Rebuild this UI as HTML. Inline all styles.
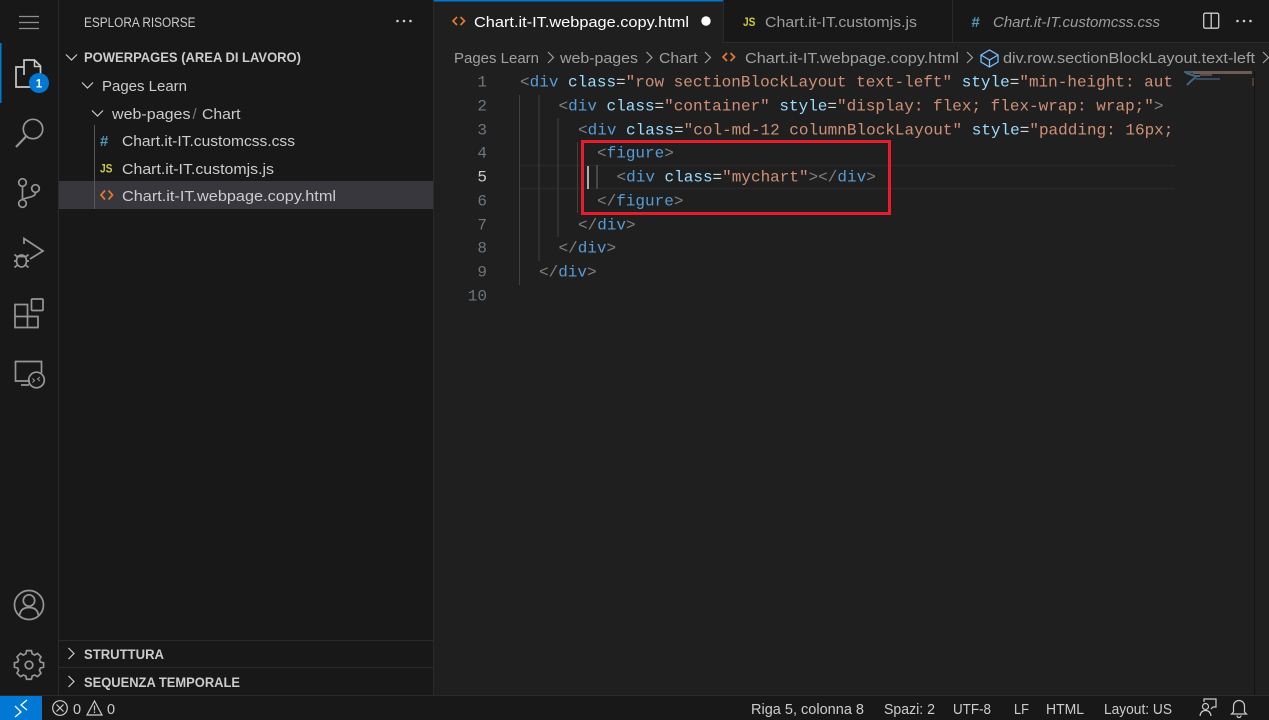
<!DOCTYPE html>
<html><head><meta charset="utf-8"><style>
html,body{margin:0;padding:0;background:#181818;overflow:hidden;width:1269px;height:720px}
svg{display:block}
text{font-family:"Liberation Sans",sans-serif;font-size:15px;white-space:pre}
.c{font-family:"Liberation Mono",monospace;font-size:16px;letter-spacing:0}
.ln{fill:#6e7681;text-anchor:end}
.b{fill:#808080}.t{fill:#569cd6}.a{fill:#9cdcfe}.e{fill:#d4d4d4}.s{fill:#ce9178}
.ic{fill:none;stroke:#969696;stroke-width:1.7}
.cv{fill:none;stroke:#cccccc;stroke-width:1.2}
.bc{fill:#a0a0a0}
.st{fill:#cccccc;font-size:14.5px}
</style></head><body>
<svg width="1269" height="720" viewBox="0 0 1269 720" xmlns="http://www.w3.org/2000/svg">
<defs><clipPath id="cl"><rect x="515" y="70" width="657" height="240"/></clipPath></defs>
<rect width="1269" height="720" fill="#181818"/>
<!-- editor -->
<rect x="434" y="43" width="835" height="652" fill="#1f1f1f"/>
<rect x="434" y="0" width="290" height="43" fill="#1f1f1f"/>
<rect x="434" y="0" width="290" height="1.5" fill="#0078d4"/>
<rect x="724" y="42" width="545" height="1" fill="#2b2b2b"/>
<rect x="723" y="0" width="1" height="43" fill="#2b2b2b"/>
<rect x="952" y="0" width="1" height="43" fill="#2b2b2b"/>
<rect x="58" y="0" width="1" height="695" fill="#2b2b2b"/>
<rect x="433" y="0" width="1" height="695" fill="#2b2b2b"/>
<rect x="59" y="640" width="374" height="1" fill="#2b2b2b"/>
<rect x="59" y="667" width="374" height="1" fill="#2b2b2b"/>
<rect x="0" y="695" width="1269" height="1" fill="#2b2b2b"/>
<!-- activity indicator -->
<rect x="0" y="43" width="1.5" height="60" fill="#0078d4"/>
<!-- hamburger -->
<path d="M19 16.5h20M19 22.5h20M19 28.5h20" stroke="#8f8f8f" stroke-width="1.2" fill="none"/>
<!-- explorer -->
<path d="M24 75V60h10.5l6 6v14H30" fill="none" stroke="#c8c8c8" stroke-width="1.7"/>
<path d="M34.5 60v6.5h6" fill="none" stroke="#c8c8c8" stroke-width="1.5"/>
<path d="M24 67h-8v20h17v-7" fill="none" stroke="#c8c8c8" stroke-width="1.7"/>
<circle cx="39" cy="83" r="10" fill="#0078d4"/>
<text x="39" y="87.5" text-anchor="middle" style="font-size:11.5px;font-weight:bold" fill="#fff">1</text>
<!-- search -->
<circle cx="33" cy="129" r="9.7" class="ic"/>
<path d="M26 136.5L16 147" class="ic" style="stroke-width:2.2"/>
<!-- source control -->
<g class="ic"><circle cx="22.5" cy="182.5" r="3.8"/><circle cx="35.5" cy="188.5" r="3.8"/><circle cx="22.5" cy="203.5" r="3.8"/><path d="M22.5 186.5v13M35.5 192.5c0 4-5 4.5-9 5.5l-3 1"/></g>
<!-- debug -->
<g class="ic"><path d="M24 244v-5.500L43 251l-13 8"/><ellipse cx="21.500" cy="261" rx="5" ry="6"/><path d="M14.500 254.500l3.500 3M28.500 254.500l-3.500 3M14 261h3M26 261h3M14.500 267.500l3.500-3M28.500 267.500l-3.500-3M17 256.500h9"/></g>
<!-- extensions -->
<g class="ic"><rect x="31.500" y="299" width="11.500" height="11.500" rx="1"/><path d="M15 316.500h12.500v11H15zM15 316.500V304.500h12.500v12M27.500 316.500h10.500v11H27.500"/></g>
<!-- remote -->
<g class="ic"><path d="M30 381H15.500v-19.500H41.500v11.500M21 385h8"/><circle cx="36.500" cy="380" r="7.800"/><path d="M32.500 382.500l2-2-2-2M40 377l-2.500 2 2.500 2" style="stroke-width:1.100"/></g>
<!-- account -->
<g class="ic"><circle cx="29" cy="605" r="14.500"/><circle cx="29" cy="600.500" r="5.700"/><path d="M19.500 616c.5-6 4-8.500 9.500-8.500s9 2.500 9.500 8.500"/></g>
<!-- gear -->
<g class="ic"><circle cx="29" cy="665" r="3.800"/><path style="stroke-width:2.100" d="M26 651h6l1 4 3 1.500 3.700-2 4.300 4.300-2 3.700 1.200 2.800 4 1v5.400l-4 1-1.200 2.900 2 3.700-4.300 4.200-3.700-2-3 1.300-1 4h-6l-1-4-3-1.300-3.700 2-4.300-4.200 2-3.700-1.200-2.900-4-1v-5.400l4-1 1.200-2.800-2-3.700 4.300-4.300 3.700 2 3-1.500z" transform="translate(5.800 129.800) scale(.8)"/></g>

<!-- sidebar -->
<text x="84" y="27" fill="#cccccc" textLength="111.500" lengthAdjust="spacingAndGlyphs" style="font-size:13.5px">ESPLORA RISORSE</text>
<g fill="#cccccc"><circle cx="397.500" cy="21" r="1.300"/><circle cx="404" cy="21" r="1.300"/><circle cx="410.500" cy="21" r="1.300"/></g>
<rect x="59" y="181" width="374" height="28" fill="#37373d"/>
<rect x="94" y="125" width="1" height="84" fill="#585858"/>
<path d="M66 54.500l5.500 5.500 5.500-5.500M82 82.500l5.500 5.500 5.500-5.500M92 110.500l5.500 5.500 5.500-5.500" class="cv"/>
<text x="84" y="62" fill="#cccccc" textLength="217" lengthAdjust="spacingAndGlyphs" style="font-size:13.5px;font-weight:bold">POWERPAGES (AREA DI LAVORO)</text>
<text x="102" y="91" fill="#cccccc" textLength="85" lengthAdjust="spacingAndGlyphs">Pages Learn</text>
<text x="112" y="119" fill="#cccccc" textLength="78.500" lengthAdjust="spacingAndGlyphs">web-pages</text>
<text x="192.500" y="119" fill="#7a7a7a">/</text>
<text x="202" y="119" fill="#cccccc" textLength="38.500" lengthAdjust="spacingAndGlyphs">Chart</text>
<text x="100" y="146" fill="#519aba" style="font-size:15px;font-weight:bold">#</text>
<text x="122" y="146" fill="#cccccc" textLength="173" lengthAdjust="spacingAndGlyphs">Chart.it-IT.customcss.css</text>
<text x="100" y="172.500" fill="#cbcb41" textLength="12.500" lengthAdjust="spacingAndGlyphs" style="font-size:12px;font-weight:bold">JS</text>
<text x="122" y="174" fill="#cccccc" textLength="152" lengthAdjust="spacingAndGlyphs">Chart.it-IT.customjs.js</text>
<path d="M105 190.500l-4 4.500 4 4.500M108.500 190.500l4 4.500-4 4.500" fill="none" stroke="#e37933" stroke-width="1.700"/>
<text x="122" y="201" fill="#cccccc" textLength="214" lengthAdjust="spacingAndGlyphs">Chart.it-IT.webpage.copy.html</text>
<path d="M68.500 648l5.500 5.500-5.500 5.500M68.500 676l5.500 5.500-5.500 5.500" class="cv"/>
<text x="84" y="659" fill="#cccccc" textLength="80" lengthAdjust="spacingAndGlyphs" style="font-size:13.5px;font-weight:bold">STRUTTURA</text>
<text x="84" y="687" fill="#cccccc" textLength="156" lengthAdjust="spacingAndGlyphs" style="font-size:13.5px;font-weight:bold">SEQUENZA TEMPORALE</text>

<!-- tabs -->
<path d="M457 17l-4 4 4 4M460.500 17l4 4-4 4" fill="none" stroke="#e37933" stroke-width="1.700"/>
<text x="474" y="27" fill="#ffffff" textLength="215" lengthAdjust="spacingAndGlyphs">Chart.it-IT.webpage.copy.html</text>
<circle cx="706" cy="21" r="4.700" fill="#fff"/>
<text x="743" y="26" fill="#cbcb41" textLength="12.500" lengthAdjust="spacingAndGlyphs" style="font-size:12px;font-weight:bold">JS</text>
<text x="765" y="27" fill="#9d9d9d" textLength="152" lengthAdjust="spacingAndGlyphs">Chart.it-IT.customjs.js</text>
<text x="971.500" y="27" fill="#519aba" style="font-size:15px;font-weight:bold">#</text>
<text x="993" y="27" fill="#9d9d9d" textLength="167" lengthAdjust="spacingAndGlyphs" font-style="italic">Chart.it-IT.customcss.css</text>
<rect x="1203.700" y="13.200" width="15" height="15" rx="1.500" fill="none" stroke="#cccccc" stroke-width="1.300"/>
<path d="M1211.200 13v15" stroke="#cccccc" stroke-width="1.300"/>
<g fill="#cccccc"><circle cx="1237.500" cy="21" r="1.300"/><circle cx="1244" cy="21" r="1.300"/><circle cx="1250.500" cy="21" r="1.300"/></g>

<!-- breadcrumbs -->
<text x="454" y="63" class="bc" textLength="85" lengthAdjust="spacingAndGlyphs">Pages Learn</text>
<text x="560" y="63" class="bc" textLength="78" lengthAdjust="spacingAndGlyphs">web-pages</text>
<text x="659" y="63" class="bc" textLength="38.500" lengthAdjust="spacingAndGlyphs">Chart</text>
<text x="745" y="63" class="bc" textLength="214" lengthAdjust="spacingAndGlyphs">Chart.it-IT.webpage.copy.html</text>
<text x="1003" y="63" class="bc" textLength="252" lengthAdjust="spacingAndGlyphs">div.row.sectionBlockLayout.text-left</text>
<path d="M548 52l5.500 5.500-5.500 5.500M646.500 52l5.500 5.500-5.500 5.500M705 52l5.500 5.500-5.500 5.500M967 52l5.500 5.500-5.500 5.500M1263 52l5.500 5.500-5.500 5.500" fill="none" stroke="#a0a0a0" stroke-width="1.200"/>
<path d="M727 53l-4 4 4 4M730.500 53l4 4-4 4" fill="none" stroke="#e37933" stroke-width="1.700"/>
<path d="M981 55l8.500-5 8.500 5v7l-8.500 5-8.500-5zM981 55l8.500 5 8.500-5M989.500 60v7" fill="none" stroke="#75beff" stroke-width="1.300"/>

<!-- current line -->
<path d="M520 165.500h655M520 188.500h655" fill="none" stroke="#282828" stroke-width="1.500"/>
<!-- guides -->
<g fill="#404040">
<rect x="519" y="95" width="1" height="190"/>
<rect x="538.500" y="95" width="1" height="166"/>
<rect x="557.500" y="118" width="1" height="119"/>
<rect x="577" y="142" width="1" height="71"/>
<rect x="596.500" y="165" width="1" height="24" fill="#707070"/>
</g>
<rect x="587" y="166" width="2" height="23" fill="#aeafad"/>

<!-- line numbers -->
<g class="c">
<text class="c ln" x="487" y="86.500">1</text>
<text class="c ln" x="487" y="110.500">2</text>
<text class="c ln" x="487" y="134.500">3</text>
<text class="c ln" x="487" y="157.500">4</text>
<text class="c ln" x="487" y="181.500" style="fill:#cccccc">5</text>
<text class="c ln" x="487" y="205.500">6</text>
<text class="c ln" x="487" y="229.500">7</text>
<text class="c ln" x="487" y="252.500">8</text>
<text class="c ln" x="487" y="276.500">9</text>
<text class="c ln" x="487" y="300.500">10</text>
</g>
<!-- code -->
<g clip-path="url(#cl)">
<text class="c" x="520" y="86.500"><tspan class="b">&lt;</tspan><tspan class="t">div</tspan> <tspan class="a">class</tspan><tspan class="e">=</tspan><tspan class="s">"row sectionBlockLayout text-left"</tspan> <tspan class="a">style</tspan><tspan class="e">=</tspan><tspan class="s">"min-height: auto;"</tspan></text>
<text class="c" x="558.500" y="110.500"><tspan class="b">&lt;</tspan><tspan class="t">div</tspan> <tspan class="a">class</tspan><tspan class="e">=</tspan><tspan class="s">"container"</tspan> <tspan class="a">style</tspan><tspan class="e">=</tspan><tspan class="s">"display: flex; flex-wrap: wrap;"</tspan><tspan class="b">&gt;</tspan></text>
<text class="c" x="578" y="134.500"><tspan class="b">&lt;</tspan><tspan class="t">div</tspan> <tspan class="a">class</tspan><tspan class="e">=</tspan><tspan class="s">"col-md-12 columnBlockLayout"</tspan> <tspan class="a">style</tspan><tspan class="e">=</tspan><tspan class="s">"padding: 16px;</tspan></text>
<text class="c" x="597" y="157.500"><tspan class="b">&lt;</tspan><tspan class="t">figure</tspan><tspan class="b">&gt;</tspan></text>
<text class="c" x="616.500" y="181.500"><tspan class="b">&lt;</tspan><tspan class="t">div</tspan> <tspan class="a">class</tspan><tspan class="e">=</tspan><tspan class="s">"mychart"</tspan><tspan class="b">&gt;&lt;/</tspan><tspan class="t">div</tspan><tspan class="b">&gt;</tspan></text>
<text class="c" x="597" y="205.500"><tspan class="b">&lt;/</tspan><tspan class="t">figure</tspan><tspan class="b">&gt;</tspan></text>
<text class="c" x="578" y="229.500"><tspan class="b">&lt;/</tspan><tspan class="t">div</tspan><tspan class="b">&gt;</tspan></text>
<text class="c" x="558.500" y="252.500"><tspan class="b">&lt;/</tspan><tspan class="t">div</tspan><tspan class="b">&gt;</tspan></text>
<text class="c" x="539" y="276.500"><tspan class="b">&lt;/</tspan><tspan class="t">div</tspan><tspan class="b">&gt;</tspan></text>
</g>
<!-- red annotation -->
<rect x="582.500" y="141.500" width="307" height="72" fill="none" stroke="#e81c2a" stroke-width="3"/>

<!-- minimap -->
<rect x="1254" y="71" width="1" height="624" fill="#111111"/>
<rect x="1184" y="71" width="9" height="2" fill="#3f5c73"/>
<rect x="1193" y="71" width="59" height="3" fill="#6d5c54"/>
<path d="M1186 73l9 3h5" stroke="#47657d" stroke-width="2" fill="none"/>
<path d="M1200 75h12" stroke="#6d5c54" stroke-width="1.500" fill="none"/>
<path d="M1196 79h24" stroke="#3f5c73" stroke-width="1.500" fill="none"/>
<path d="M1196 77l-5 4-4 4" stroke="#47657d" stroke-width="2" fill="none"/>
<rect x="1252.500" y="78" width="1" height="8" fill="#8a5a40"/>

<!-- status bar -->
<rect x="0" y="696" width="42" height="24" fill="#0078d4"/>
<path d="M15 706l6 6-6 5M27 700l-6 5 6 5" fill="none" stroke="#fff" stroke-width="1.300"/>
<circle cx="60" cy="708" r="7.300" fill="none" stroke="#cccccc" stroke-width="1.200"/>
<path d="M56.500 704.500l7 7M63.500 704.500l-7 7" stroke="#cccccc" stroke-width="1.200"/>
<text x="73" y="714" class="st">0</text>
<path d="M94.500 701l7.500 14h-15z" fill="none" stroke="#cccccc" stroke-width="1.200"/>
<path d="M94.500 705.500v5M94.500 711.500v1.500" stroke="#cccccc" stroke-width="1.200"/>
<text x="107" y="714" class="st">0</text>
<text x="751" y="714" class="st" textLength="113" lengthAdjust="spacingAndGlyphs">Riga 5, colonna 8</text>
<text x="884" y="714" class="st" textLength="51" lengthAdjust="spacingAndGlyphs">Spazi: 2</text>
<text x="953" y="714" class="st" textLength="38" lengthAdjust="spacingAndGlyphs">UTF-8</text>
<text x="1014" y="714" class="st" textLength="15" lengthAdjust="spacingAndGlyphs">LF</text>
<text x="1046" y="714" class="st" textLength="38" lengthAdjust="spacingAndGlyphs">HTML</text>
<text x="1104" y="714" class="st" textLength="68" lengthAdjust="spacingAndGlyphs">Layout: US</text>
<g fill="none" stroke="#cccccc" stroke-width="1.200">
<circle cx="1205.500" cy="706.500" r="3"/>
<path d="M1200 716c.5-3.500 2.500-5.500 5.500-5.500s5 2 5.500 5.500M1204 702v-3h12v8h-3l-2 2"/>
<path d="M1233.500 712v-6a5.500 5.500 0 0 1 11 0v6l2 2h-15zM1237 715.500a2 2 0 0 0 4 0"/>
</g>
</svg>
</body></html>
